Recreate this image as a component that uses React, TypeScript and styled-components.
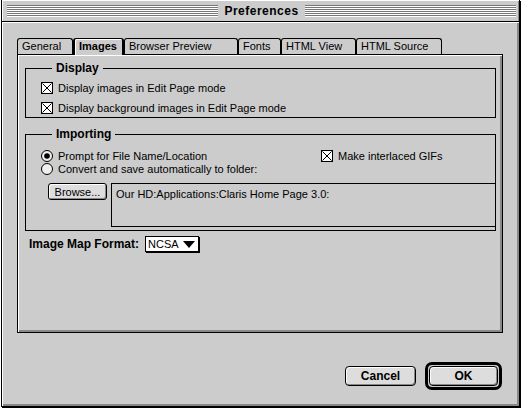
import React from 'react';
import styled, { createGlobalStyle } from 'styled-components';

const Global = createGlobalStyle`
  html, body { margin: 0; padding: 0; background: #fff; }
  body { font-family: "Liberation Sans", Arial, sans-serif; font-size: 11px; color: #000; }
  * { box-sizing: border-box; }
`;

const Screen = styled.div`
  width: 521px;
  height: 409px;
  overflow: hidden;
  background: #fff;
  padding-left: 1px;
`;

const Window = styled.div`
  width: 519px;
  height: 407px;
  border: 1px solid #000;
  border-top: none;
  background: #ccc;
  display: flex;
  flex-direction: column;
  box-shadow: 1px 1px 0 #000;
`;

const TitleBar = styled.div`
  height: 22px;
  border-bottom: 1px solid #000;
  display: flex;
  align-items: center;
  gap: 6px;
  padding: 0 3px 0 5px;
  background: #ccc;
  box-shadow: inset 1px 1px 0 #fff, inset -1px 0 0 #888;
`;

const Stripes = styled.div`
  flex: 1;
  height: 12px;
  background: repeating-linear-gradient(to bottom, #777 0 1px, #fff 1px 2px);
`;

const Title = styled.div`
  font-weight: bold;
  font-size: 12px;
  letter-spacing: 0.5px;
  line-height: 14px;
`;

const Body = styled.div`
  flex: 1;
  padding: 16px 0 0 15px;
  display: flex;
  flex-direction: column;
  box-shadow: inset 1px 1px 0 #fff, inset -2px -2px 0 #888;
`;

const TabRow = styled.div`
  display: flex;
  align-items: flex-end;
  height: 16px;
`;

const Tab = styled.div<{ $w: number; $active?: boolean }>`
  width: ${(p) => p.$w}px;
  height: ${(p) => (p.$active ? 17 : 16)}px;
  margin-bottom: ${(p) => (p.$active ? -1 : 0)}px;
  position: relative;
  z-index: ${(p) => (p.$active ? 1 : 0)};
  border: 1px solid #000;
  border-left-width: ${(p) => (p.$active ? 2 : 1)}px;
  border-right-width: ${(p) => (p.$active ? 2 : 1)}px;
  border-bottom: none;
  border-radius: 3px 3px 0 0;
  background: #ccc;
  box-shadow: ${(p) => (p.$active ? 'inset 1px 1px 0 #fff' : 'none')};
  padding-left: ${(p) => (p.$active ? 4 : 4)}px;
  font-size: 11px;
  font-weight: ${(p) => (p.$active ? 'bold' : 'normal')};
  line-height: 15px;
  white-space: nowrap;
`;

const Panel = styled.div`
  width: 486px;
  height: 279px;
  border: 1px solid #000;
  background: #ccc;
  box-shadow: inset 1px 1px 0 #fff, inset -2px -2px 0 #888;
  padding: 6px 6px 0 7px;
  display: flex;
  flex-direction: column;
`;

const Group = styled.fieldset<{ $top?: number; $pad: string }>`
  margin: ${(p) => p.$top ?? 0}px 0 0 0;
  border: 1px solid #000;
  padding: ${(p) => p.$pad};
  min-width: 0;
  display: flex;
  flex-direction: column;
`;

const Legend = styled.legend`
  font-weight: bold;
  font-size: 12px;
  line-height: 14px;
  padding: 0 4px;
  margin-left: 11px;
`;

const CheckRow = styled.label<{ $h: number }>`
  display: flex;
  align-items: center;
  gap: 5px;
  height: ${(p) => p.$h}px;
  font-size: 11px;
  white-space: nowrap;
`;

const Stack = styled.div<{ $gap: number }>`
  display: flex;
  flex-direction: column;
  gap: ${(p) => p.$gap}px;
`;

const OptionGrid = styled.div`
  display: grid;
  grid-template-columns: 280px 1fr;
`;

const FolderRow = styled.div`
  display: flex;
  margin-top: 8px;
  height: 44px;
`;

const SmallButton = styled.button`
  margin-left: 7px;
  width: 59px;
  height: 17px;
  border: 1px solid #000;
  border-radius: 3px;
  background: #ddd;
  box-shadow: inset 1px 1px 0 #fff, inset -1px -1px 0 #888;
  font-family: "Liberation Sans", Arial, sans-serif;
  font-size: 11px;
  padding: 0;
  color: #000;
`;

const PathField = styled.div`
  flex: 1;
  margin-left: 4px;
  border: 1px solid #000;
  border-right: none;
  padding: 4px 0 0 4px;
  font-size: 11px;
  line-height: 13px;
`;

const MapRow = styled.div`
  display: flex;
  align-items: center;
  gap: 6px;
  margin: 5px 0 0 4px;
`;

const MapLabel = styled.span`
  font-weight: bold;
  font-size: 12px;
`;

const Popup = styled.div`
  width: 54px;
  height: 16px;
  border: 1px solid #000;
  box-shadow: 1px 1px 0 #000;
  background: #fff;
  display: flex;
  align-items: center;
  justify-content: space-between;
  padding: 0 3px 0 2px;
  font-size: 11px;
`;

const ButtonRow = styled.div`
  width: 486px;
  margin-top: 29px;
  padding-right: 1px;
  display: flex;
  justify-content: flex-end;
  align-items: center;
  gap: 9px;
`;

const PushButton = styled.button<{ $w: number }>`
  width: ${(p) => p.$w}px;
  height: 20px;
  border: 1px solid #000;
  border-radius: 4px;
  background: #ddd;
  box-shadow: inset 1px 1px 0 #fff, inset -1px -1px 0 #888;
  font-family: "Liberation Sans", Arial, sans-serif;
  font-weight: bold;
  font-size: 12px;
  padding: 0;
  color: #000;
`;

const DefaultRing = styled.div`
  border: 3px solid #000;
  border-radius: 7px;
  padding: 1px;
  display: flex;
`;

const CheckBox = () => (
  <svg width="12" height="12" viewBox="0 0 12 12">
    <rect x="0.5" y="0.5" width="11" height="11" fill="#fff" stroke="#000" />
    <path d="M1.5 1.5 L10.5 10.5 M10.5 1.5 L1.5 10.5" stroke="#000" strokeWidth="1" />
  </svg>
);

const Radio = ({ on }: { on?: boolean }) => (
  <svg width="12" height="12" viewBox="0 0 12 12">
    <circle cx="6" cy="6" r="5.5" fill="#eee" stroke="#000" />
    {on && <circle cx="6" cy="6" r="2.8" fill="#000" />}
  </svg>
);

const tabs: { label: string; w: number; active?: boolean }[] = [
  { label: 'General', w: 56 },
  { label: 'Images', w: 51, active: true },
  { label: 'Browser Preview', w: 114 },
  { label: 'Fonts', w: 43 },
  { label: 'HTML View', w: 75 },
  { label: 'HTML Source', w: 86 },
];

export default function App() {
  return (
    <Screen>
      <Global />
      <Window>
        <TitleBar>
          <Stripes />
          <Title>Preferences</Title>
          <Stripes />
        </TitleBar>
        <Body>
          <TabRow>
            {tabs.map((t) => (
              <Tab key={t.label} $w={t.w} $active={t.active}>
                {t.label}
              </Tab>
            ))}
          </TabRow>
          <Panel>
            <Group $pad="5px 0 1px 15px">
              <Legend>Display</Legend>
              <Stack $gap={4}>
                <CheckRow $h={16}>
                  <CheckBox />
                  Display images in Edit Page mode
                </CheckRow>
                <CheckRow $h={16}>
                  <CheckBox />
                  Display background images in Edit Page mode
                </CheckRow>
              </Stack>
            </Group>
            <Group $top={9} $pad="8px 0 3px 15px">
              <Legend>Importing</Legend>
              <OptionGrid>
                <CheckRow $h={13}>
                  <Radio on />
                  Prompt for File Name/Location
                </CheckRow>
                <CheckRow $h={13}>
                  <CheckBox />
                  Make interlaced GIFs
                </CheckRow>
                <CheckRow $h={13}>
                  <Radio />
                  Convert and save automatically to folder:
                </CheckRow>
              </OptionGrid>
              <FolderRow>
                <SmallButton>Browse...</SmallButton>
                <PathField>Our HD:Applications:Claris Home Page 3.0:</PathField>
              </FolderRow>
            </Group>
            <MapRow>
              <MapLabel>Image Map Format:</MapLabel>
              <Popup>
                NCSA
                <svg width="12" height="7" viewBox="0 0 12 7">
                  <polygon points="0,0 12,0 6,7" fill="#000" />
                </svg>
              </Popup>
            </MapRow>
          </Panel>
          <ButtonRow>
            <PushButton $w={71}>Cancel</PushButton>
            <DefaultRing>
              <PushButton $w={69}>OK</PushButton>
            </DefaultRing>
          </ButtonRow>
        </Body>
      </Window>
    </Screen>
  );
}
